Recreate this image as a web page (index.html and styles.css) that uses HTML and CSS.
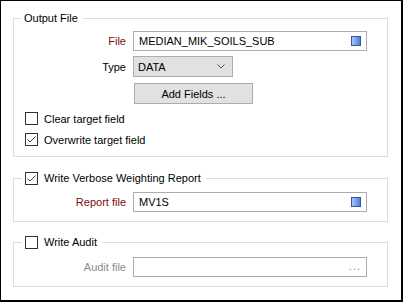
FILE: index.html
```html
<!DOCTYPE html>
<html lang="en">
<head>
    <meta charset="UTF-8">
    <title>Output File</title>
    <link rel="stylesheet" href="styles.css">
</head>
<body>
    <div class="window">
        <fieldset class="group group-output">
            <legend>Output File</legend>
            <div class="row row-file">
                <span class="lbl req">File</span>
                <div class="field">
                    <span class="value">MEDIAN_MIK_SOILS_SUB</span>
                    <span class="pick"></span>
                </div>
            </div>
            <div class="row row-type">
                <span class="lbl">Type</span>
                <div class="select">
                    <span class="value">DATA</span>
                    <svg class="chevron" width="8" height="5" viewBox="0 0 8 5"><path d="M0.5 0.5 L4 4 L7.5 0.5" fill="none" stroke="#555" stroke-width="1"/></svg>
                </div>
            </div>
            <div class="row row-btn">
                <span class="lbl"></span>
                <div class="btn">Add Fields ...</div>
            </div>
            <div class="check check-first">
                <span class="box"></span>
                <span>Clear target field</span>
            </div>
            <div class="check">
                <span class="box"><svg width="11" height="11" viewBox="0 0 11 11"><path d="M1.5 5.5 L4 8 L9.5 2.5" fill="none" stroke="#444" stroke-width="1"/></svg></span>
                <span>Overwrite target field</span>
            </div>
        </fieldset>

        <fieldset class="group group-report">
            <legend>
                <span class="box"><svg width="11" height="11" viewBox="0 0 11 11"><path d="M1.5 5.5 L4 8 L9.5 2.5" fill="none" stroke="#444" stroke-width="1"/></svg></span>
                <span>Write Verbose Weighting Report</span>
            </legend>
            <div class="row">
                <span class="lbl req">Report file</span>
                <div class="field">
                    <span class="value">MV1S</span>
                    <span class="pick"></span>
                </div>
            </div>
        </fieldset>

        <fieldset class="group group-audit">
            <legend>
                <span class="box"></span>
                <span>Write Audit</span>
            </legend>
            <div class="row">
                <span class="lbl off">Audit file</span>
                <div class="field">
                    <span class="value"></span>
                    <span class="dots">...</span>
                </div>
            </div>
        </fieldset>
    </div>
</body>
</html>
```

FILE: styles.css
```css
body {
    margin: 0;
    font-family: "Liberation Sans", Arial, sans-serif;
    font-size: 11px;
    color: #000;
    background: #fff;
}
.window {
    width: 403px;
    height: 302px;
    box-sizing: border-box;
    border: 1px solid #000;
    border-right-width: 2px;
    border-bottom-width: 2px;
    background: #fff;
    padding: 0 13px 0 12px;
}
.group {
    margin: 0;
    padding: 0;
    border: 1px solid #dcdcdc;
    min-width: 0;
}
.group legend {
    display: flex;
    align-items: center;
    height: 15px;
    line-height: 15px;
    padding: 0 5px 0 3px;
    margin-left: 8px;
}
.group-output {
    margin-top: 10px;
    padding: 5px 0 6px 0;
}
.group-output legend {
    margin-left: 7px;
}
.group-report {
    margin-top: 14px;
    padding: 6px 0 9px 0;
}
.group-audit {
    margin-top: 13px;
    padding: 7px 0 9px 0;
}
.row {
    display: flex;
    align-items: center;
}
.lbl {
    width: 112px;
    margin-right: 7px;
    text-align: right;
    flex: none;
}
.req {
    color: #7d0b0b;
}
.off {
    color: #8d8d8d;
}
.field {
    width: 234px;
    height: 20px;
    box-sizing: border-box;
    border: 1px solid #adadad;
    background: #fff;
    display: flex;
    align-items: center;
    padding: 0 5px 0 5px;
}
.field .value {
    flex: 1;
}
.pick {
    width: 10px;
    height: 10px;
    box-sizing: border-box;
    border: 1px solid #3b5688;
    background: linear-gradient(to right, #a9c6f7, #4b7de4);
}
.dots {
    color: #8d8d8d;
    letter-spacing: 1px;
    line-height: 10px;
    padding-bottom: 2px;
}
.select {
    width: 100px;
    height: 21px;
    box-sizing: border-box;
    border: 1px solid #adadad;
    background: #e1e1e1;
    display: flex;
    align-items: center;
    padding: 0 7px 0 4px;
}
.select .value {
    flex: 1;
}
.row-type {
    margin-top: 5px;
}
.row-btn {
    margin-top: 6px;
}
.btn {
    width: 119px;
    height: 21px;
    box-sizing: border-box;
    border: 1px solid #adadad;
    background: #e1e1e1;
    display: flex;
    align-items: center;
    justify-content: center;
    margin-left: 1px;
}
.check {
    display: flex;
    align-items: center;
    height: 21px;
    padding-left: 11px;
}
.check-first {
    margin-top: 4px;
}
.box {
    width: 13px;
    height: 13px;
    box-sizing: border-box;
    border: 1px solid #333;
    background: #fff;
    margin-right: 6px;
    flex: none;
    display: flex;
    align-items: center;
    justify-content: center;
}
```
